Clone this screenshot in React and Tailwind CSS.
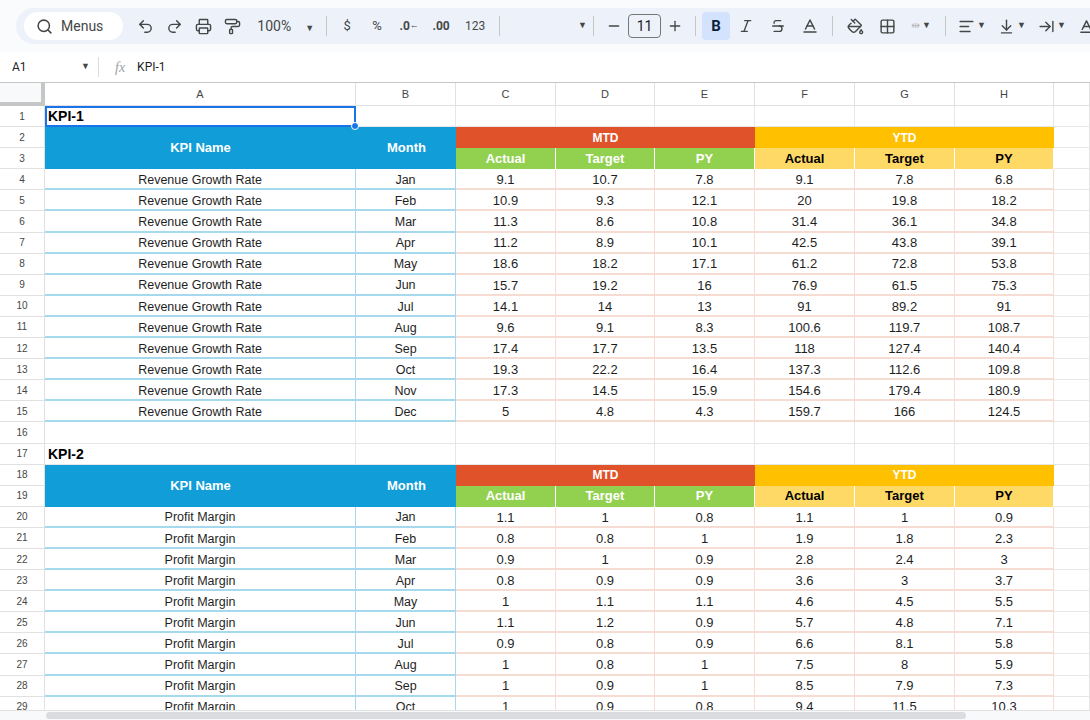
import { Search, Undo2, Redo2, Printer, PaintRoller, Minus, Plus, Italic, Strikethrough, PaintBucket, Grid2x2, AlignLeft, ArrowDownToLine, ArrowRightToLine, Baseline } from 'lucide-react'

const COLS = ['A', 'B', 'C', 'D', 'E', 'F', 'G', 'H', '']
const MONTHS = ['Jan', 'Feb', 'Mar', 'Apr', 'May', 'Jun', 'Jul', 'Aug', 'Sep', 'Oct', 'Nov', 'Dec']

const KPI1 = [
  [9.1, 10.7, 7.8, 9.1, 7.8, 6.8], [10.9, 9.3, 12.1, 20, 19.8, 18.2], [11.3, 8.6, 10.8, 31.4, 36.1, 34.8],
  [11.2, 8.9, 10.1, 42.5, 43.8, 39.1], [18.6, 18.2, 17.1, 61.2, 72.8, 53.8], [15.7, 19.2, 16, 76.9, 61.5, 75.3],
  [14.1, 14, 13, 91, 89.2, 91], [9.6, 9.1, 8.3, 100.6, 119.7, 108.7], [17.4, 17.7, 13.5, 118, 127.4, 140.4],
  [19.3, 22.2, 16.4, 137.3, 112.6, 109.8], [17.3, 14.5, 15.9, 154.6, 179.4, 180.9], [5, 4.8, 4.3, 159.7, 166, 124.5],
]
const KPI2 = [
  [1.1, 1, 0.8, 1.1, 1, 0.9], [0.8, 0.8, 1, 1.9, 1.8, 2.3], [0.9, 1, 0.9, 2.8, 2.4, 3], [0.8, 0.9, 0.9, 3.6, 3, 3.7],
  [1, 1.1, 1.1, 4.6, 4.5, 5.5], [1.1, 1.2, 0.9, 5.7, 4.8, 7.1], [0.9, 0.8, 0.9, 6.6, 8.1, 5.8], [1, 0.8, 1, 7.5, 8, 5.9],
  [1, 0.9, 1, 8.5, 7.9, 7.3], [1, 0.9, 0.8, 9.4, 11.5, 10.3],
]

function Tb({ children, className = '' }) {
  return <div className={`flex items-center justify-center h-7 px-1.5 text-[#444746] ${className}`}>{children}</div>
}
const Caret = () => <span className="text-[9px] text-[#444746] ml-0.5">▼</span>
const Sep = () => <div className="w-px h-5 bg-[#c7c7c7] mx-1.5" />

function Cell({ r, c, rs = 1, cs = 1, className = '', children }) {
  return (
    <div style={{ gridRow: `${r} / span ${rs}`, gridColumn: `${c} / span ${cs}` }}
      className={`flex items-center justify-center overflow-hidden whitespace-nowrap ${className}`}>
      {children}
    </div>
  )
}

function Block({ start, title, name, data }) {
  const cells = []
  cells.push(<Cell key="t" r={start} c={2} className="justify-start pl-[3px] font-bold text-[14px] text-black">{title}</Cell>)
  const h = start + 1
  cells.push(<Cell key="kn" r={h} rs={2} c={2} className="bg-[#119dd8] text-white font-bold text-[13px]">KPI Name</Cell>)
  cells.push(<Cell key="mo" r={h} rs={2} c={3} className="bg-[#119dd8] text-white font-bold text-[13px] border-l border-[#119dd8]">Month</Cell>)
  cells.push(<Cell key="mtd" r={h} cs={3} c={4} className="bg-[#e0522a] text-white font-bold text-[12px]">MTD</Cell>)
  cells.push(<Cell key="ytd" r={h} cs={3} c={7} className="bg-[#ffc000] text-white font-bold text-[12px]">YTD</Cell>)
  ;['Actual', 'Target', 'PY'].forEach((t, i) => {
    cells.push(<Cell key={'g' + i} r={h + 1} c={4 + i} className="bg-[#92d050] text-white font-bold text-[13px] border-r border-white">{t}</Cell>)
    cells.push(<Cell key={'y' + i} r={h + 1} c={7 + i} className="bg-[#ffd966] text-black font-bold text-[13px] border-r border-white">{t}</Cell>)
  })
  data.forEach((row, i) => {
    const r = h + 2 + i
    cells.push(<Cell key={'n' + i} r={r} c={2} className="border-b-2 border-r border-[#a6d8ee] text-[12.5px] pt-[3px]">{name}</Cell>)
    cells.push(<Cell key={'m' + i} r={r} c={3} className="border-b-2 border-r border-[#a6d8ee] text-[12.5px] pt-[3px]">{MONTHS[i]}</Cell>)
    row.forEach((v, j) => {
      cells.push(<Cell key={i + '-' + j} r={r} c={4 + j} className="border-b-2 border-r border-[#f6dcd3] text-[13px] pt-[2px]">{v}</Cell>)
    })
  })
  return cells
}

export default function App() {
  const rowCount = 30
  return (
    <div className="w-[1090px] h-[720px] overflow-hidden bg-[#f9fbfd] relative" style={{ fontFamily: 'Roboto, "Liberation Sans", sans-serif' }}>
      {/* Toolbar */}
      <div className="pt-2 px-4 h-[52px]">
        <div className="flex items-center h-9 rounded-full bg-[#edf2fa] pl-2 pr-2 w-[1200px] text-[14px]">
          <div className="flex items-center gap-2 bg-white rounded-full h-7 pl-3 pr-5 text-[#444746]">
            <Search size={17} strokeWidth={2.2} />
            <span className="text-[14px]">Menus</span>
          </div>
          <Tb className="ml-2"><Undo2 size={17} /></Tb>
          <Tb><Redo2 size={17} /></Tb>
          <Tb><Printer size={17} /></Tb>
          <Tb><PaintRoller size={17} /></Tb>
          <Tb className="ml-1"><span className="text-[14px]">100%</span><span className="ml-3"><Caret /></span></Tb>
          <Sep />
          <Tb className="text-[13px] w-7">$</Tb>
          <Tb className="text-[13px] w-8">%</Tb>
          <Tb className="text-[12px] w-8 font-bold">.0<span className="text-[9px]">←</span></Tb>
          <Tb className="text-[12px] w-8 font-bold">.00</Tb>
          <Tb className="text-[12px] w-9">123</Tb>
          <Sep />
          <div className="w-[70px]" />
          <Caret />
          <Sep />
          <Tb><Minus size={16} /></Tb>
          <div className="w-[33px] h-6 border border-[#747775] rounded flex items-center justify-center text-[14px] text-[#1f1f1f]">11</div>
          <Tb><Plus size={16} /></Tb>
          <Sep />
          <div className="w-7 h-7 rounded bg-[#d3e3fd] flex items-center justify-center font-bold text-[#0b1f3a] text-[15px]">B</div>
          <Tb className="w-8"><Italic size={16} /></Tb>
          <Tb className="w-8"><Strikethrough size={16} /></Tb>
          <Tb className="w-8"><Baseline size={18} /></Tb>
          <Sep />
          <Tb className="w-8"><PaintBucket size={17} /></Tb>
          <Tb className="w-8"><Grid2x2 size={17} /></Tb>
          <Tb className="w-9 text-[#b7b9bb]"><span className="text-[11px]">⇹</span><Caret /></Tb>
          <Sep />
          <Tb><AlignLeft size={17} /><Caret /></Tb>
          <Tb><ArrowDownToLine size={17} /><Caret /></Tb>
          <Tb><ArrowRightToLine size={17} /><Caret /></Tb>
          <Tb><Baseline size={17} /></Tb>
        </div>
      </div>
      {/* Formula bar */}
      <div className="flex items-center h-[30px] bg-white text-[12px] text-[#1f1f1f]">
        <div className="w-[98px] pl-3 flex items-center justify-between pr-2">A1<span className="text-[9px] text-[#444746]">▼</span></div>
        <div className="w-px h-5 bg-[#dadce0]" />
        <span className="italic text-[#9aa0a6] text-[14px] ml-4 mr-3" style={{ fontFamily: '"Liberation Serif", serif' }}>fx</span>
        KPI-1
      </div>
      {/* Sheet */}
      <div className="bg-white border-t border-[#c4c7c5]" style={{ fontFamily: '"Liberation Sans", Arial, sans-serif' }}>
        <div className="grid grid-cols-[45px_311px_100px_100px_99px_100px_100px_100px_99px_36px] auto-rows-[21.1px] text-[#1f1f1f]"
          style={{ gridTemplateRows: '23px' }}>
          <div className="bg-[#f8f9fa] border-r-4 border-b-4 border-[#c4c7c5]" style={{ gridRow: '1', gridColumn: '1' }} />
          {COLS.map((c, i) => (
            <div key={c + i} style={{ gridRow: '1', gridColumn: i + 2 }}
              className="flex items-center justify-center text-[11px] text-[#444746] bg-white border-r border-b border-[#e1e1e1]">{c}</div>
          ))}
          {Array.from({ length: rowCount }, (_, i) => (
            <div key={'rh' + i} style={{ gridRow: i + 2, gridColumn: 1 }}
              className="flex items-center justify-center text-[10px] text-[#444746] bg-white border-r border-b border-[#e1e1e1]">{i + 1}</div>
          ))}
          {Array.from({ length: rowCount }, (_, i) => COLS.map((c, j) => (
            <div key={'g' + i + j} style={{ gridRow: i + 2, gridColumn: j + 2 }} className="border-r border-b border-[#e6e6e6]" />
          )))}
          {Block({ start: 2, title: 'KPI-1', name: 'Revenue Growth Rate', data: KPI1 })}
          {Block({ start: 18, title: 'KPI-2', name: 'Profit Margin', data: KPI2 })}
          <div style={{ gridRow: '2', gridColumn: '2' }} className="relative border-2 border-[#1a73e8] pointer-events-none">
            <div className="absolute -right-[5px] -bottom-[5px] w-2 h-2 rounded-full bg-[#1a73e8] border border-white" />
          </div>
        </div>
      </div>
      <div className="absolute left-0 right-0 bottom-0 h-[10px] bg-[#f8f9fa] border-t border-[#e1e1e1]">
        <div className="ml-[46px] mt-[1px] w-[920px] h-[7px] rounded-full bg-[#dadce0]" />
      </div>
    </div>
  )
}
